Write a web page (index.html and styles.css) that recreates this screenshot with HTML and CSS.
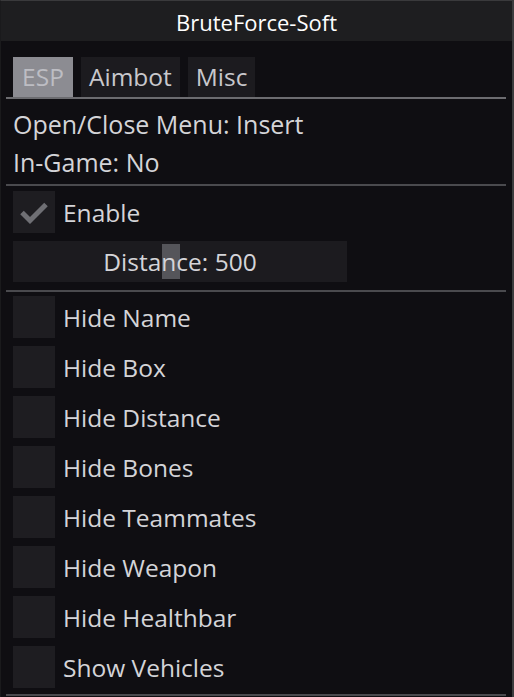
FILE: index.html
```html
<!DOCTYPE html>
<html>
<head>
<meta charset="utf-8">
<link rel="stylesheet" href="styles.css">
</head>
<body>
<div class="window">
  <div class="titlebar">BruteForce-Soft</div>
  <div class="content">
    <div class="tabbar">
      <div class="tab active">ESP</div>
      <div class="tab">Aimbot</div>
      <div class="tab">Misc</div>
    </div>
    <div class="text-row first">Open/Close Menu: Insert</div>
    <div class="text-row">In-Game: No</div>
    <div class="sep sep-a"></div>
    <div class="check-row">
      <div class="box">
        <svg width="42" height="42" viewBox="0 0 42 42"><path d="M9 21.5 L17 29.5 L33 13.5" fill="none" stroke="#6f6f74" stroke-width="5"/></svg>
      </div>
      <span class="label">Enable</span>
    </div>
    <div class="slider">
      <div class="grab"></div>
      <span class="slider-text">Distance: 500</span>
    </div>
    <div class="sep sep-b"></div>
    <div class="list">
      <div class="check-row"><div class="box"></div><span class="label">Hide Name</span></div>
      <div class="check-row"><div class="box"></div><span class="label">Hide Box</span></div>
      <div class="check-row"><div class="box"></div><span class="label">Hide Distance</span></div>
      <div class="check-row"><div class="box"></div><span class="label">Hide Bones</span></div>
      <div class="check-row"><div class="box"></div><span class="label">Hide Teammates</span></div>
      <div class="check-row"><div class="box"></div><span class="label">Hide Weapon</span></div>
      <div class="check-row"><div class="box"></div><span class="label">Hide Healthbar</span></div>
      <div class="check-row"><div class="box"></div><span class="label">Show Vehicles</span></div>
    </div>
    <div class="sep sep-c"></div>
  </div>
</div>
</body>
</html>
```
FILE: styles.css
```css
* { box-sizing: border-box; }
html, body {
  margin: 0;
  padding: 0;
  background: #0f0e12;
}
.window {
  width: 514px;
  height: 697px;
  background: #0f0e12;
  border-top: 1px solid #3a3a3c;
  border-right: 2px solid #3c3c3e;
  border-left: 1px solid #1a1a1c;
  overflow: hidden;
  font-family: "Open Sans", "Noto Sans", sans-serif;
  color: #d4d4d8;
  line-height: 1;
}
.titlebar {
  height: 40px;
  background: #1e1e20;
  color: #ffffff;
  font-size: 22px;
  display: flex;
  align-items: center;
  justify-content: center;
  padding-top: 1px;
}
.content {
  padding: 0 6px 0 5px;
}
.tabbar {
  margin-top: 16px;
  display: flex;
  gap: 8px;
  padding-left: 7px;
  border-bottom: 2px solid #6c6c70;
  height: 42px;
}
.tab {
  height: 40px;
  background: #1c1b1f;
  font-size: 24.5px;
  color: #c8c8cc;
  display: flex;
  align-items: center;
  justify-content: center;
  padding: 1px 8px 0;
}
.tab.active {
  background: #8c8c92;
  color: #bdbdc3;
  width: 60px;
}
.text-row {
  height: 38px;
  display: flex;
  align-items: center;
  padding-left: 7px;
  font-size: 25px;
}
.text-row.first {
  margin-top: 6px;
}
.sep {
  height: 2px;
  background: #4a4a4e;
}
.sep-a { margin-top: 3px; }
.check-row {
  height: 42px;
  display: flex;
  align-items: center;
  gap: 8px;
  padding-left: 7px;
}
.sep-a + .check-row { margin-top: 5px; }
.box {
  width: 42px;
  height: 42px;
  background: #1e1d21;
  flex: none;
}
.box svg { display: block; }
.label {
  font-size: 24.5px;
  padding-top: 2px;
}
.slider {
  margin: 8px 0 0 7px;
  width: 334px;
  height: 41px;
  background: #1c1b1f;
  position: relative;
  display: flex;
  align-items: center;
  justify-content: center;
  font-size: 24.5px;
}
.grab {
  position: absolute;
  left: 149px;
  top: 3px;
  width: 18px;
  height: 35px;
  background: #55555a;
}
.slider-text {
  position: relative;
  padding-top: 2px;
}
.sep-b { margin-top: 8px; }
.list {
  display: flex;
  flex-direction: column;
  gap: 8px;
  margin-top: 4px;
}
.sep-c { margin-top: 6px; }
```
